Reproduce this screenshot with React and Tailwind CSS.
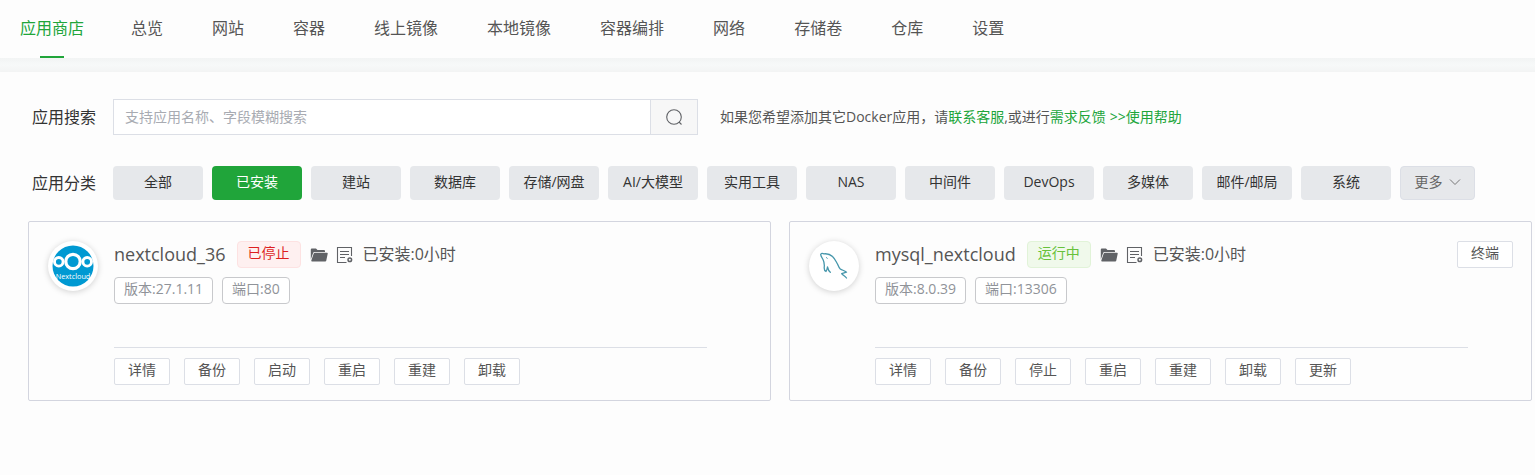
import { useState } from 'react'

const TABS = ['应用商店', '总览', '网站', '容器', '线上镜像', '本地镜像', '容器编排', '网络', '存储卷', '仓库', '设置']

const CATEGORIES = ['全部', '已安装', '建站', '数据库', '存储/网盘', 'AI/大模型', '实用工具', 'NAS', '中间件', 'DevOps', '多媒体', '邮件/邮局', '系统']

const APPS = [
  {
    name: 'nextcloud_36',
    running: false,
    status: '已停止',
    version: '27.1.11',
    port: '80',
    uptime: '0小时',
    logo: NextcloudLogo,
    actions: ['详情', '备份', '启动', '重启', '重建', '卸载'],
  },
  {
    name: 'mysql_nextcloud',
    running: true,
    status: '运行中',
    version: '8.0.39',
    port: '13306',
    uptime: '0小时',
    logo: MysqlLogo,
    actions: ['详情', '备份', '停止', '重启', '重建', '卸载', '更新'],
  },
]

function NextcloudLogo() {
  return (
    <svg viewBox="0 0 42 42" className="h-[42px] w-[42px]">
      <circle cx="21" cy="21" r="20.5" fill="#0099d2" />
      <g fill="none" stroke="#fff">
        <circle cx="21" cy="16.5" r="7.2" strokeWidth="3.2" />
        <circle cx="6.8" cy="16.8" r="4.3" strokeWidth="2.9" />
        <circle cx="35.2" cy="16.8" r="4.3" strokeWidth="2.9" />
      </g>
      <text x="21" y="34" textAnchor="middle" fontSize="7.3" fill="#fff">Nextcloud</text>
    </svg>
  )
}

function MysqlLogo() {
  return (
    <svg viewBox="0 0 42 42" className="h-[42px] w-[42px]" fill="none" stroke="#4596ab" strokeLinecap="round" strokeLinejoin="round">
      <path strokeWidth="1.3" d="M17.300 27.300c-1.500-1.300-2.300-3-2.800-5.300-.3 1.500-.5 3-1.500 4.500-2-1-2-3-1.700-5 .2-3-.3-5-1.300-7-1-1.800-2.300-3.500-2.300-5C8.200 8 9.500 8.200 11 8.800c3-.3 6.500.7 8.500 2.700 2.500 2.300 3.500 5 5 7.500.8 2 1.300 3.500 2.800 5 2 1.300 4.200 1.500 6.200 3.200l-4.800 1.500c1 1.500 3.500 2.300 4.800 4.300" />
      <path strokeWidth="1" d="M13.600 12.600l.6.800" />
    </svg>
  )
}

function FolderIcon() {
  return (
    <svg viewBox="0 0 18 14" className="h-3.5 w-[18px]" fill="#606266">
      <path d="M.8 11.500V1.500Q.8.500 1.800.500H6l1.500 1.500h6.500q1 0 1 1v1H4.500q-1 0-1.300.8z" />
      <path d="M4.800 4.800H17q.9 0 .7.900l-1.400 6.800q-.2.900-1.100.9H2q-.9 0-.7-.9L3.700 5.600q.3-.8 1.100-.8z" />
    </svg>
  )
}

function LogIcon() {
  return (
    <svg viewBox="0 0 17 17" className="h-[17px] w-[17px]" fill="none" stroke="#606266">
      <path d="M15.500 10V1.500H1.500v15h9M4 5.500h9M4 8.500h9M4 11.500h5" strokeWidth="1.100" />
      <circle cx="13.800" cy="13.800" r="1.800" strokeWidth="1.500" />
    </svg>
  )
}

function SearchIcon() {
  return (
    <svg viewBox="0 0 18 18" className="h-[18px] w-[18px]" fill="none" stroke="#606266" strokeWidth="1.100">
      <circle cx="9" cy="9" r="7.300" />
      <path d="M14 14l2.500 2.500" />
    </svg>
  )
}

function SmallButton({ children }) {
  return (
    <button className="flex h-[27px] w-14 items-center justify-center rounded-xs border border-[#dcdfe6] bg-white pb-1 text-sm leading-5 text-[#555]">
      {children}
    </button>
  )
}

function InfoTag({ children }) {
  return (
    <span className="flex h-[27px] items-center rounded border border-[#c8c9cc] bg-white px-[9px] pb-1 text-sm leading-5 text-[#909399]">
      {children}
    </span>
  )
}

function AppCard({ app }) {
  const Logo = app.logo

  return (
    <article className="flex h-[180px] rounded-xs border border-[#d3d5df] pt-[19px] pr-[18px] pl-[19px]">
      <div className="flex h-[50px] w-[50px] shrink-0 items-center justify-center rounded-full bg-white shadow-[0_1px_6px_rgba(0,0,0,0.18)]">
        <Logo />
      </div>
      <div className="ml-4 flex min-w-0 flex-1 flex-col">
        <div className="flex h-[27px] items-center">
          <h2 className="pb-0.5 text-lg leading-6 text-[#555]">{app.name}</h2>
          <span
            className={
              app.running
                ? 'ml-[11px] flex h-[27px] items-center rounded border border-[#e1f3d8] bg-[#f0f9eb] px-2.5 pb-1 text-sm leading-5 text-[#67c23a]'
                : 'ml-[11px] flex h-[27px] items-center rounded border border-[#fde2e2] bg-[#fef0f0] px-2.5 pb-1 text-sm leading-5 text-[#dd1f1f]'
            }
          >
            {app.status}
          </span>
          <button aria-label="打开目录" className="ml-[9px]"><FolderIcon /></button>
          <button aria-label="查看日志" className="ml-2"><LogIcon /></button>
          <span className="ml-2.5 pb-0.5 text-base text-[#555]">已安装:{app.uptime}</span>
          {app.running && (
            <div className="ml-auto">
              <SmallButton>终端</SmallButton>
            </div>
          )}
        </div>
        <div className="mt-[9px] flex gap-[9px]">
          <InfoTag>版本:{app.version}</InfoTag>
          <InfoTag>端口:{app.port}</InfoTag>
        </div>
        <div className="mt-[43px] mr-[45px] flex gap-3.5 border-t border-[#dcdfe6] pt-2.5">
          {app.actions.map((action) => (
            <SmallButton key={action}>{action}</SmallButton>
          ))}
        </div>
      </div>
    </article>
  )
}

export default function App() {
  const [tab, setTab] = useState('应用商店')
  const [category, setCategory] = useState('已安装')
  const [keyword, setKeyword] = useState('')

  return (
    <div className="min-h-screen bg-[#fdfdfd] font-['Open_Sans','Noto_Sans_CJK_SC',sans-serif] text-[#333]">
      <nav className="flex h-[58px] gap-px text-base text-[#555]">
        {TABS.map((item) => (
          <button
            key={item}
            onClick={() => setTab(item)}
            className={
              item === tab
                ? 'relative mr-0.5 px-5 pb-0.5 text-[#20a53a] after:absolute after:bottom-0 after:left-1/2 after:h-0.5 after:w-6 after:-translate-x-1/2 after:bg-[#20a53a]'
                : 'px-6 pb-0.5'
            }
          >
            {item}
          </button>
        ))}
      </nav>
      <div className="h-3.5 bg-linear-to-b from-[#f2f4f4] via-[#f7f9f9] to-[#f3f4f4]" />

      <main className="pt-[27px]">
        <div className="flex items-center pl-8">
          <label htmlFor="app-search" className="w-[81px] shrink-0 text-base">应用搜索</label>
          <div className="flex h-9 w-[585px] border border-[#dcdfe6] bg-white">
            <input
              id="app-search"
              value={keyword}
              onChange={(e) => setKeyword(e.target.value)}
              placeholder="支持应用名称、字段模糊搜索"
              className="min-w-0 flex-1 px-[11px] text-sm outline-none placeholder:text-[#a8abb2]"
            />
            <button aria-label="搜索" className="flex w-[47px] items-center justify-center border-l border-[#dcdfe6] bg-[#f7f7f7]">
              <SearchIcon />
            </button>
          </div>
          <p className="ml-[22px] text-sm text-[#555]">
            如果您希望添加其它Docker应用，请<a href="#service" className="text-[#20a53a]">联系客服</a>,或进行<a href="#feedback" className="text-[#20a53a]">需求反馈</a>
            <a href="#help" className="ml-1 text-[#20a53a]">&gt;&gt;使用帮助</a>
          </p>
        </div>

        <div className="mt-[31px] flex items-center pl-8">
          <span className="w-[81px] shrink-0 text-base">应用分类</span>
          <div className="flex gap-[9px]">
            {CATEGORIES.map((item) => (
              <button
                key={item}
                onClick={() => setCategory(item)}
                className={
                  item === category
                    ? 'h-[34px] w-[90px] rounded bg-[#20a53a] pb-0.5 text-sm text-white'
                    : 'h-[34px] w-[90px] rounded bg-[#e6e8eb] pb-0.5 text-sm'
                }
              >
                {item}
              </button>
            ))}
            <button className="flex h-[34px] w-[75px] items-center justify-center gap-1.5 rounded border border-[#dcdfe6] bg-[#e6e8eb] pb-0.5 text-sm text-[#666]">
              更多
              <svg viewBox="0 0 12 8" className="h-2 w-3" fill="none" stroke="#777">
                <path d="M1 1.500l5 5 5-5" />
              </svg>
            </button>
          </div>
        </div>

        <section className="mt-[21px] grid grid-cols-2 gap-[18px] pr-[3px] pl-7">
          {APPS.map((app) => (
            <AppCard key={app.name} app={app} />
          ))}
        </section>
      </main>
    </div>
  )
}
